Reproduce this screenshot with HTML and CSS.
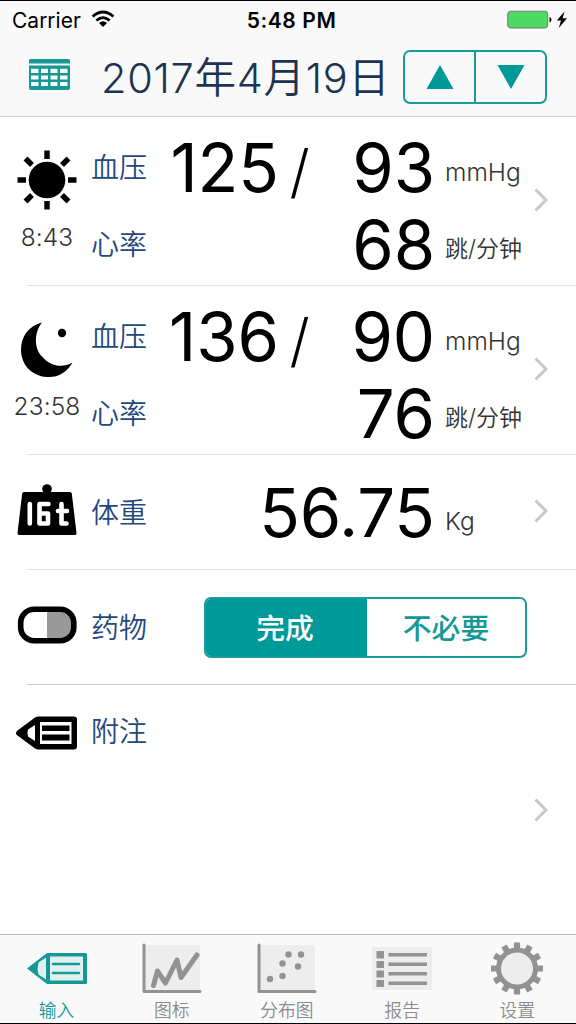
FILE: index.html
```html
<!DOCTYPE html>
<html lang="zh-CN">
<head>
<meta charset="utf-8">
<title>血压</title>
<link rel="stylesheet" href="styles.css">
</head>
<body>
<div class="app">
  <header class="top">
    <div class="status">
      <div class="carrier"><span>Carrier</span>
        <svg class="wifi" width="24" height="18" viewBox="0 0 24 18"><g fill="none" stroke="#000" stroke-width="2.7"><path d="M1.6 6.600Q12 -2.600 22.400 6.600"/><path d="M5.400 10.600Q12 4.800 18.600 10.600"/></g><path d="M8 13Q12 9.600 16 13L12 17Z"/></svg>
      </div>
      <div class="clock">5:48 PM</div>
      <div class="power">
        <svg width="64" height="20" viewBox="0 0 64 20"><rect x=".7" y="1.2" width="40" height="16.8" rx="3" fill="#4cd964" stroke="#777" stroke-width="1"/><path d="M42.5 7v5.500Q44.500 11.500 44.500 9.700T42.500 7Z"/><path d="M57.500 1.500L49.800 10.500H54L51.800 18L60 8.300H55.600Z"/></svg>
      </div>
    </div>
    <div class="nav">
      <svg class="calendar" width="41" height="31" viewBox="0 0 41 31"><path fill="#159896" fill-rule="evenodd" d="M1.500 0H39.500Q41 0 41 1.500V4.500H0V1.500Q0 0 1.500 0ZM0 6.500H41V29Q41 31 39 31H2Q0 31 0 29ZM2 9.700V14H9.500V9.700ZM12 9.700V14H19V9.700ZM21.500 9.700V14H28.500V9.700ZM31 9.700V14H38.500V9.700ZM2 16.500V20.500H9.500V16.500ZM12 16.500V20.500H19V16.500ZM21.500 16.500V20.500H28.500V16.500ZM31 16.500V20.500H38.500V16.500ZM2 23V27H9.500V23ZM12 23V27H19V23ZM21.500 23V27H28.500V23ZM31 23V27H38.500V23Z"/></svg>
      <h1 class="date">2017年4月19日</h1>
      <div class="stepper">
        <button class="step"><svg width="28" height="26" viewBox="0 0 28 26"><path d="M14 1L27.500 25H.5Z"/></svg></button>
        <button class="step"><svg width="28" height="26" viewBox="0 0 28 26"><path d="M.5 1H27.500L14 25Z"/></svg></button>
      </div>
    </div>
  </header>

  <main class="rows">
    <section class="row reading">
      <div class="mark">
        <svg width="60" height="60" viewBox="0 0 60 60"><circle cx="30" cy="30" r="18.300"/><g stroke="#000" stroke-width="5.500"><path d="M30 .5V9M30 51V59.500M.5 30H9M51 30H59.500M8.500 8.500L15 15M45 45L51.500 51.500M8.500 51.500L15 45M45 15L51.500 8.500"/></g></svg>
        <time class="time">8:43</time>
      </div>
      <div class="labels"><span class="label">血压</span><span class="label">心率</span></div>
      <div class="values"><span class="num systolic">125</span><span class="slash">/</span><span class="num">93</span><span class="unit">mmHg</span>
        <span class="num pulse">68</span><span class="unit cjk">跳/分钟</span></div>
      <svg class="chevron" width="14" height="24" viewBox="0 0 14 24"><path d="M1.500 1.500L12 12L1.500 22.500"/></svg>
    </section>

    <section class="row reading">
      <div class="mark">
        <svg width="60" height="60" viewBox="0 0 60 60"><path d="M25 3.500C18 12 16 28 25 37.500C34 48 46 49 55.500 43.500C50 53.500 40 59 30 58C14 57 4 45 4 31C4 17 12 7 25 3.500Z"/><circle cx="45" cy="14" r="4.200"/></svg>
        <time class="time">23:58</time>
      </div>
      <div class="labels"><span class="label">血压</span><span class="label">心率</span></div>
      <div class="values"><span class="num systolic">136</span><span class="slash">/</span><span class="num">90</span><span class="unit">mmHg</span>
        <span class="num pulse">76</span><span class="unit cjk">跳/分钟</span></div>
      <svg class="chevron" width="14" height="24" viewBox="0 0 14 24"><path d="M1.500 1.500L12 12L1.500 22.500"/></svg>
    </section>

    <section class="row weight">
      <div class="mark">
        <svg width="60" height="52" viewBox="0 0 60 52"><circle cx="30" cy="5" r="4.800"/><path d="M7 8H53Q54.500 8 54.800 9.500L59.500 49Q59.500 51 58 51H2Q.5 51 .5 49L5.200 9.500Q5.500 8 7 8Z"/><g fill="none" stroke="#fff" stroke-width="4.600" stroke-linecap="round" stroke-linejoin="round"><path d="M12.800 20V39.500M31.500 20H22.500V39.500H31V29.500H23"/><path d="M44.500 20V39.500H49.500M41 27H50"/></g></svg>
      </div>
      <span class="label">体重</span>
      <div class="values"><span class="num pulse">56.75</span><span class="unit">Kg</span></div>
      <svg class="chevron" width="14" height="24" viewBox="0 0 14 24"><path d="M1.500 1.500L12 12L1.500 22.500"/></svg>
    </section>

    <section class="row medicine">
      <div class="mark">
        <svg width="60" height="38" viewBox="0 0 60 38"><path fill="#999" d="M30 3H43A16 16 0 0 1 43 35H30Z"/><rect x="3.700" y="3.200" width="53.100" height="31.600" rx="13.500" fill="none" stroke="#000" stroke-width="5.600"/></svg>
      </div>
      <span class="label">药物</span>
      <div class="segmented"><button class="segment on">完成</button><button class="segment">不必要</button></div>
    </section>

    <section class="row note">
      <div class="mark">
        <svg width="62" height="34" viewBox="0 0 62 34"><path fill-rule="evenodd" d="M0 17Q0 15.500 1.500 14.500L19 1.500Q21 .5 22 .5H58Q61 .5 61 3.500V30.500Q61 33.500 58 33.500H22Q21 33.500 19 32.500L1.500 19.500Q0 18.500 0 17ZM12 13.500Q10.800 17 12 20.500L19 25V9ZM24 6V28H55.500V6ZM26 9.500H53.500V15H26ZM26 18.500H53.500V24.500H26Z"/></svg>
      </div>
      <span class="label">附注</span>
      <svg class="chevron" width="14" height="24" viewBox="0 0 14 24"><path d="M1.500 1.500L12 12L1.500 22.500"/></svg>
    </section>
  </main>

  <nav class="tabs">
    <a class="tab active">
      <svg width="60" height="56" viewBox="0 0 60 56"><path fill="#dff1f0" d="M11 22L22 14H58V43H22L11 35Z"/><path fill="#159896" fill-rule="evenodd" d="M0 28.500L20 13H58.500Q60 13 60 14.500V42.500Q60 44 58.500 44H20ZM11.500 22.500Q9.800 28.500 11.500 34.500L19 39.500V17.500ZM23 16.500V40.500H56V16.500Z"/><path stroke="#159896" stroke-width="2.400" stroke-linecap="round" d="M26 24H52M26 33H52"/></svg>
      <span>输入</span></a>
    <a class="tab">
      <svg width="60" height="56" viewBox="0 0 60 56"><path fill="#ededed" d="M2 5H58V52H2Z"/><g fill="none" stroke="#929292" stroke-linecap="round" stroke-linejoin="round"><path stroke-width="3" d="M2 5V51.500H58"/><path stroke-width="5" d="M11.500 45.500L15.500 31L23.500 43L35 20L39 37.500L55 15"/></g></svg>
      <span>图标</span></a>
    <a class="tab">
      <svg width="60" height="56" viewBox="0 0 60 56"><path fill="#ededed" d="M2 5H58V52H2Z"/><path fill="none" stroke="#929292" stroke-width="3" stroke-linecap="round" stroke-linejoin="round" d="M2 5V51.500H58"/><g fill="#929292"><circle cx="13" cy="39" r="3.200"/><circle cx="25.500" cy="36" r="3.200"/><circle cx="25.500" cy="23.500" r="3.200"/><circle cx="31.500" cy="14.500" r="3.200"/><circle cx="44" cy="14.500" r="3.200"/><circle cx="41" cy="26.500" r="3.200"/></g></svg>
      <span>分布图</span></a>
    <a class="tab">
      <svg width="60" height="56" viewBox="0 0 60 56"><path fill="#ededed" d="M0 7H60V50H0Z"/><g fill="#929292"><path d="M4.500 11H12V18.500H4.500ZM4.500 21H12V28H4.500ZM4.500 30.500H12V37.500H4.500ZM4.500 40H12V47H4.500Z"/><path d="M16.500 13H55V16.500H16.500ZM16.500 22.500H55V26H16.500ZM16.500 32H55V35.500H16.500ZM16.500 41.500H55V45H16.500Z"/></g></svg>
      <span>报告</span></a>
    <a class="tab">
      <svg width="60" height="56" viewBox="0 0 60 56"><g stroke="#929292" stroke-width="6.200"><path d="M30 2.500V54.500M4 28.500H56M17 6L43 51M43 6L17 51M7.500 15.500L52.500 41.500M7.500 41.500L52.500 15.500"/></g><circle cx="30" cy="28.500" r="18.500" fill="#ededed" stroke="#929292" stroke-width="5"/></svg>
      <span>设置</span></a>
  </nav>
</div>
</body>
</html>
```
FILE: styles.css
```css
* { box-sizing: border-box; }
body { margin: 0; font-family: Inter, "Noto Sans CJK SC", sans-serif; color: #000; background: #fff; }
svg { display: block; flex: none; }
button { font: inherit; margin: 0; padding: 0; border: 0; background: none; }
.app { width: 576px; height: 1024px; display: flex; flex-direction: column; border-top: 1px solid #000; border-bottom: 1px solid #000; overflow: hidden; }

.top { height: 116px; background: #f9f9f9; border-bottom: 1px solid #ccc; }
.status { height: 38px; display: grid; grid-template-columns: 1fr 100px 1fr; align-items: center; padding: 0 5px 0 12px; font-size: 21px; }
.carrier { display: flex; align-items: center; gap: 10px; }
.wifi { margin-bottom: 2px; }
.clock { font-weight: 600; text-align: center; white-space: nowrap; letter-spacing: .6px; }
.power { display: flex; justify-content: flex-end; }
.nav { display: flex; align-items: center; height: 76px; padding: 0 29px; }
.calendar { margin-bottom: 5px; }
.date { margin: 0 0 0 31px; padding-top: 2px; width: 302px; font-size: 41.500px; font-weight: 350; line-height: 60px; letter-spacing: .7px; color: #1d3450; white-space: nowrap; }
.stepper { display: flex; width: 144px; height: 54px; border: 2px solid #1b9c9a; border-radius: 7px; }
.step { width: 69px; display: grid; place-items: center; }
.step + .step { width: 71px; border-left: 2px solid #1b9c9a; }
.step svg { fill: #009999; }

.rows { flex: 1; display: flex; flex-direction: column; }
.row { position: relative; display: grid; grid-template-columns: 73px 60px 302px 82px 14px; grid-template-rows: 100%; padding-left: 17px; align-items: center; }
.row::after { content: ""; position: absolute; left: 27px; right: 0; bottom: 0; height: 1px; background: #e4e4e4; }
.note::after { display: none; }
.reading { height: 169px; }
.weight, .medicine { height: 115px; }
.medicine::after { background: #c8c8c8; }
.note { height: 249px; }
.mark { width: 60px; display: flex; flex-direction: column; align-items: center; }
.reading .mark { align-self: start; padding-top: 33px; }
.weight .mark, .medicine .mark { padding-bottom: 6px; }
.time { margin-top: 10px; font-size: 24.500px; line-height: 34px; color: #333; font-weight: 350; letter-spacing: .1px; }
.labels { align-self: start; padding-top: 13px; display: grid; grid-template-rows: 77px 77px; align-items: center; }
.label { font-size: 28px; font-weight: 350; line-height: 77px; color: #23497a; white-space: nowrap; padding: 1px 0 0 1px; }
.labels .label { padding-top: 0; }
.values { grid-column: 3 / 5; align-self: start; padding-top: 12px; display: grid; grid-template-columns: 129px 41px 115px 1fr; grid-template-rows: 77px 77px; align-items: start; }
.num { font-size: 67px; font-weight: 370; line-height: 77px; text-align: right; letter-spacing: -.1px; }
.pulse { grid-column: 1 / 4; }
.slash { padding-top: 4px; font-size: 58px; line-height: 77px; font-weight: 300; text-align: center; }
.unit { padding-left: 10px; margin-top: 23px; font-size: 24.500px; line-height: 40px; font-weight: 350; color: #333; white-space: nowrap; }
.unit.cjk { font-size: 23px; }
.chevron { grid-column: 5; margin-bottom: 4px; fill: none; stroke: #c7c7cc; stroke-width: 3; }
.note .chevron { margin-bottom: 0; }
.weight .values { padding-top: 19px; }
.weight .unit { margin-top: 27px; }

.segmented { grid-column: 3 / 6; width: 323px; height: 61px; margin-left: 54px; display: flex; border: 2px solid #1b9c9a; border-radius: 7px; overflow: hidden; background: #fff; }
.segment { flex: 1; font-size: 28.800px; color: #159896; font-weight: 500; line-height: 57px; padding-top: 1px; }
.segment.on { background: #009999; color: #fff; padding-right: 3px; }

.note .mark { align-self: start; padding-top: 31px; }
.note .label { align-self: start; padding-top: 9px; }

.tabs { height: 89px; display: grid; grid-template-columns: repeat(5, 115.200px); background: #f9f9f9; border-top: 1px solid #bbb; }
.tab { display: flex; flex-direction: column; align-items: center; padding: 5px 2px 0 0; font-size: 17.800px; line-height: 30px; font-weight: 350; color: #8c8c8c; }
.tab.active { color: #159896; }
```
